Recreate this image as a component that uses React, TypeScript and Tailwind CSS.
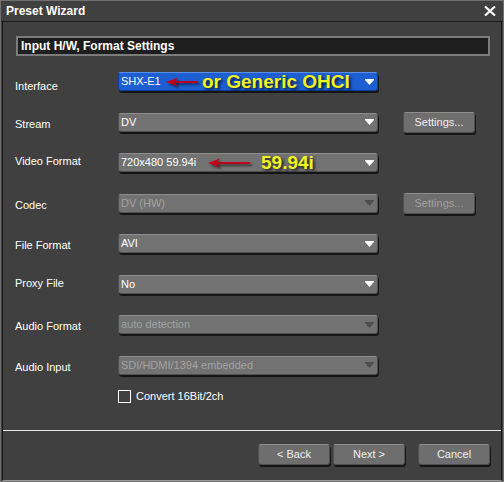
import React from 'react';

type Row = {
  label: string;
  value: string;
  labelPad: string;
  blue?: boolean;
  disabled?: boolean;
  settings?: 'on' | 'off';
  note?: 'ohci' | 'fps';
};

const rows: Row[] = [
  { label: 'Interface', value: 'SHX-E1', labelPad: 'pt-[9px]', blue: true, note: 'ohci' },
  { label: 'Stream', value: 'DV', labelPad: 'pt-[6px]', settings: 'on' },
  { label: 'Video Format', value: '720x480 59.94i', labelPad: 'pt-[3px]', note: 'fps' },
  { label: 'Codec', value: 'DV (HW)', labelPad: 'pt-[6px]', disabled: true, settings: 'off' },
  { label: 'File Format', value: 'AVI', labelPad: 'pt-[6px]' },
  { label: 'Proxy File', value: 'No', labelPad: 'pt-[3px]' },
  { label: 'Audio Format', value: 'auto detection', labelPad: 'pt-[6px]', disabled: true },
  { label: 'Audio Input', value: 'SDI/HDMI/1394 embedded', labelPad: 'pt-[6px]', disabled: true },
];

const RedArrow = ({ width }: { width: number }) => (
  <svg width={width} height="12" viewBox={`0 0 ${width} 12`} className="drop-shadow-[2px_2px_1px_rgba(0,0,0,0.55)]">
    <path d={`M0 6 L12 1.5 L9.5 5 L${width} 5 L${width} 7 L9.5 7 L12 10.5 Z`} fill="#c0001a" />
  </svg>
);

const Arrow = ({ dim }: { dim?: boolean }) => (
  <svg width="9" height="6" viewBox="0 0 9 6">
    <path d="M0 0 H9 V1 L4.5 6 L0 1 Z" fill={dim ? '#4e4e4e' : '#ffffff'} />
  </svg>
);

const Dropdown = ({ row }: { row: Row }) => {
  const bg = row.blue ? 'bg-[#1d5fd1] border-[#123f96] border-t-[#5a8ee8]' : 'bg-[#727272] border-[#505050] border-t-[#8e8e8e]';
  const text = row.disabled ? 'text-[#a3a3a3]' : 'text-white';
  return (
    <div className={`relative w-[260px] h-[19px] rounded-[3px] border ${bg} shadow-[1px_2px_0_#151515] flex items-center justify-between pl-[2px] pr-[3px]`}>
      <span className={`text-[11px] ${text} leading-none`}>{row.value}</span>
      <Arrow dim={row.disabled} />
      {row.note === 'ohci' && (
        <div className="absolute left-[47px] top-[-1px] flex items-center gap-[4px]">
          <RedArrow width={32} />
          <span className="text-[19px] leading-[19px] font-bold text-[#f2f21c] [text-shadow:2px_2px_3px_rgba(0,0,0,0.75)]">
            or Generic OHCI
          </span>
        </div>
      )}
      {row.note === 'fps' && (
        <div className="absolute left-[89px] top-[-1px] flex items-center gap-[11px]">
          <RedArrow width={42} />
          <span className="text-[19px] leading-[19px] font-bold text-[#f2f21c] [text-shadow:2px_2px_3px_rgba(0,0,0,0.75)]">
            59.94i
          </span>
        </div>
      )}
    </div>
  );
};

const Button = ({ children, dim }: { children: React.ReactNode; dim?: boolean }) => (
  <div
    className={`w-[72px] h-[21px] rounded-[3px] border border-[#505050] border-t-[#8e8e8e] bg-[#6e6e6e] shadow-[1px_2px_0_#151515] flex items-center justify-center text-[11px] ${
      dim ? 'text-[#a0a0a0]' : 'text-[#f0f0f0]'
    }`}
  >
    {children}
  </div>
);

export default function App() {
  return (
    <div className="w-[504px] h-[482px] bg-[#404040] border border-[#707070] flex flex-col font-['Liberation_Sans',Arial,sans-serif] text-white select-none">
      {/* title bar */}
      <div className="h-[21px] flex items-center justify-between pl-[5px] pr-[7px] border-b border-[#1c1c1c] shrink-0">
        <span className="text-[12px] font-bold">Preset Wizard</span>
        <svg width="12" height="10" viewBox="0 0 12 10">
          <path d="M1 0.5 L11 9.5 M11 0.5 L1 9.5" stroke="#ffffff" strokeWidth="2.2" />
        </svg>
      </div>

      <div className="flex-1 flex flex-col ml-[1px] mr-[1px] border-x border-b border-x-[#161616] border-b-[#9a9a9a]">
        {/* section header */}
        <div className="mt-[14px] ml-[13px] w-[474px] h-[20px] border-2 border-[#7c7c7c] bg-[#1e1e1e] flex items-center pl-[3px]">
          <span className="text-[12px] font-bold">Input H/W, Format Settings</span>
        </div>

        {/* form rows */}
        <div className="mt-[16px] flex flex-col gap-[21.5px] pl-[12px]">
          {rows.map((row) => (
            <div key={row.label} className="h-[19px] flex items-center">
              <div className={`w-[103px] self-start text-[11px] leading-none ${row.labelPad}`}>{row.label}</div>
              <Dropdown row={row} />
              {row.settings && (
                <div className="ml-[25px]">
                  <Button dim={row.settings === 'off'}>Settings...</Button>
                </div>
              )}
            </div>
          ))}
        </div>

        {/* checkbox */}
        <div className="mt-[15px] ml-[115px] flex items-center gap-[5px] h-[13px]">
          <div className="w-[13px] h-[13px] border border-white" />
          <span className="text-[11px]">Convert 16Bit/2ch</span>
        </div>

        {/* separator */}
        <div className="mt-[27px] h-[1px] bg-[#e8e8e8]" />

        {/* footer buttons */}
        <div className="mt-[13px] flex items-center pl-[255px]">
          <Button>&lt; Back</Button>
          <div className="ml-[3px]">
            <Button>Next &gt;</Button>
          </div>
          <div className="ml-[13px]">
            <Button>Cancel</Button>
          </div>
        </div>
      </div>
    </div>
  );
}
